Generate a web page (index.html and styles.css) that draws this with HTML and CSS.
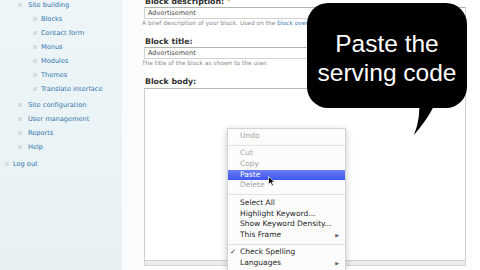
FILE: index.html
```html
<!DOCTYPE html>
<html>
<head>
<meta charset="utf-8">
<link rel="stylesheet" href="styles.css">
</head>
<body>
<div class="page">
  <aside class="sidebar">
    <ul class="nav">
      <li class="item"><span class="bullet"></span><a>Site building</a></li>
      <li>
        <ul class="sub">
          <li class="item"><span class="bullet"></span><a>Blocks</a></li>
          <li class="item"><span class="bullet"></span><a>Contact form</a></li>
          <li class="item"><span class="bullet"></span><a>Menus</a></li>
          <li class="item"><span class="bullet"></span><a>Modules</a></li>
          <li class="item"><span class="bullet"></span><a>Themes</a></li>
          <li class="item"><span class="bullet"></span><a>Translate interface</a></li>
        </ul>
      </li>
      <li class="item"><span class="bullet"></span><a>Site configuration</a></li>
      <li class="item"><span class="bullet"></span><a>User management</a></li>
      <li class="item"><span class="bullet"></span><a>Reports</a></li>
      <li class="item"><span class="bullet"></span><a>Help</a></li>
    </ul>
    <div class="logout"><span class="bullet"></span><a>Log out</a></div>
  </aside>
  <div class="gutter"></div>
  <main class="main">
    <div class="label">Block description: <span class="req">*</span></div>
    <div class="input">Advertisement</div>
    <div class="desc">A brief description of your block. Used on the <a class="dlink">block overview page</a>.</div>
    <div class="label gap">Block title:</div>
    <div class="input">Advertisement</div>
    <div class="desc">The title of the block as shown to the user.</div>
    <div class="label gap">Block body:</div>
    <div class="textarea"></div>
    <div class="grippie"></div>
  </main>
</div>

<div class="bubble"><span>Paste the</span><span>serving code</span></div>
<svg class="tail" width="32" height="42" viewBox="0 0 32 42"><path d="M9 0 L27 0 Q25 14 4 39 Q11 22 9 0 Z" fill="#000"/></svg>

<div class="ctx">
  <div class="mi dis"><span class="chk"></span><span class="t">Undo</span></div>
  <div class="sep"></div>
  <div class="mi dis"><span class="chk"></span><span class="t">Cut</span></div>
  <div class="mi dis"><span class="chk"></span><span class="t">Copy</span></div>
  <div class="mi sel"><span class="chk"></span><span class="t">Paste</span></div>
  <div class="mi dis"><span class="chk"></span><span class="t">Delete</span></div>
  <div class="sep"></div>
  <div class="mi"><span class="chk"></span><span class="t">Select All</span></div>
  <div class="mi"><span class="chk"></span><span class="t">Highlight Keyword...</span></div>
  <div class="mi"><span class="chk"></span><span class="t">Show Keyword Density...</span></div>
  <div class="mi"><span class="chk"></span><span class="t">This Frame</span><span class="arr">▶</span></div>
  <div class="sep"></div>
  <div class="mi"><span class="chk">✓</span><span class="t">Check Spelling</span></div>
  <div class="mi"><span class="chk"></span><span class="t">Languages</span><span class="arr">▶</span></div>
</div>

<svg class="cursor" width="8" height="11" viewBox="0 0 8 11"><path d="M0.5 0.5 L0.5 8.5 L2.5 6.6 L4 9.8 L5.4 9.2 L3.9 6.1 L6.6 6.1 Z" fill="#000" stroke="#fff" stroke-width="0.7"/></svg>
</body>
</html>
```

FILE: styles.css
```css
html, body {
  margin: 0;
  padding: 0;
}
body {
  width: 480px;
  height: 270px;
  overflow: hidden;
  position: relative;
  background: #fff;
  font-family: "DejaVu Sans", Verdana, sans-serif;
}
a { text-decoration: none; }

.page {
  display: flex;
  height: 270px;
  overflow: hidden;
}

/* Sidebar */
.sidebar {
  width: 122px;
  flex: none;
  background: linear-gradient(#edf5f8, #e7f1f4);
  font-size: 6.6px;
}
.nav {
  list-style: none;
  margin: -2px 0 0 0;
  padding: 0 0 0 18px;
}
.nav ul {
  list-style: none;
  margin: 0 0 2px 0;
  padding: 0 0 0 15px;
}
.item {
  display: flex;
  align-items: center;
  height: 14px;
}
.item a, .logout a {
  color: #3474ad;
  white-space: nowrap;
}
.bullet {
  width: 4px;
  height: 4px;
  background: #d5dfe3;
  margin-right: 6px;
  flex: none;
}
.sub .bullet { margin-right: 4px; }
.logout {
  display: flex;
  align-items: center;
  height: 14px;
  margin-top: 2.6px;
  padding-left: 5px;
}
.logout .bullet { margin-right: 4px; }

.gutter {
  width: 22px;
  flex: none;
  background: #f9fbfc;
}

/* Main form */
.main {
  flex: 1;
  padding-right: 14px;
  margin-top: -3px;
  display: flex;
  flex-direction: column;
}
.label {
  font-weight: bold;
  font-size: 7.8px;
  line-height: 10px;
  height: 10px;
  color: #333;
  padding-left: 1px;
  white-space: nowrap;
}
.label.gap { margin-top: 10px; }
.req { color: #e7a72c; font-weight: normal; }
.input {
  height: 12px;
  box-sizing: border-box;
  border: 1px solid #d2d2d2;
  border-top-color: #b2b2b2;
  font-size: 6.5px;
  line-height: 10px;
  padding-left: 3px;
  color: #444;
  background: #fff;
}
.desc {
  font-size: 5.9px;
  line-height: 8px;
  height: 8px;
  color: #8a8a8a;
  margin-left: -2px;
  white-space: nowrap;
}
.dlink { color: #3f7fbd; }
.textarea {
  margin-top: 1px;
  height: 173px;
  box-sizing: border-box;
  border: 1px solid #cfcfcf;
  border-top-color: #b8b8b8;
  background: #fff;
}
.grippie {
  height: 5px;
  box-sizing: border-box;
  background: #ececec;
  border: 1px solid #d6d6d6;
  border-top: none;
}

/* Speech bubble */
.bubble {
  position: absolute;
  left: 307px;
  top: 3px;
  width: 160px;
  height: 105px;
  box-sizing: border-box;
  padding-top: 4px;
  background: #000;
  border-radius: 21px;
  color: #fff;
  font-family: "Liberation Sans", Arial, sans-serif;
  font-size: 24.5px;
  line-height: 29px;
  display: flex;
  flex-direction: column;
  justify-content: center;
  align-items: center;
  white-space: nowrap;
}
.tail {
  position: absolute;
  left: 410px;
  top: 96px;
}

/* Context menu */
.ctx {
  position: absolute;
  left: 227px;
  top: 128px;
  width: 119px;
  height: 142px;
  box-sizing: border-box;
  padding-top: 2px;
  background: rgba(252, 252, 252, 0.97);
  border: 1px solid #d4d4d4;
  border-bottom: none;
  box-shadow: 0 2px 7px rgba(0, 0, 0, 0.22);
  font-family: "DejaVu Sans", sans-serif;
  font-size: 7.5px;
  overflow: hidden;
}
.mi {
  display: flex;
  align-items: center;
  height: 10.7px;
  line-height: 10.7px;
  padding-left: 2px;
  padding-right: 6px;
  color: #1c1c1c;
  white-space: nowrap;
}
.mi .chk {
  width: 10px;
  flex: none;
  font-size: 7px;
  color: #333;
}
.mi .t { flex: 1; }
.mi .arr {
  font-size: 5px;
  color: #666;
}
.mi.dis { color: #a3a3a3; }
.mi.sel {
  background: linear-gradient(#6a7ef6, #3d55ee);
  color: #fff;
}
.sep {
  height: 1px;
  background: #e2e2e2;
  margin: 3px 0 2.7px 0;
}

.cursor {
  position: absolute;
  left: 268px;
  top: 176px;
}
```
